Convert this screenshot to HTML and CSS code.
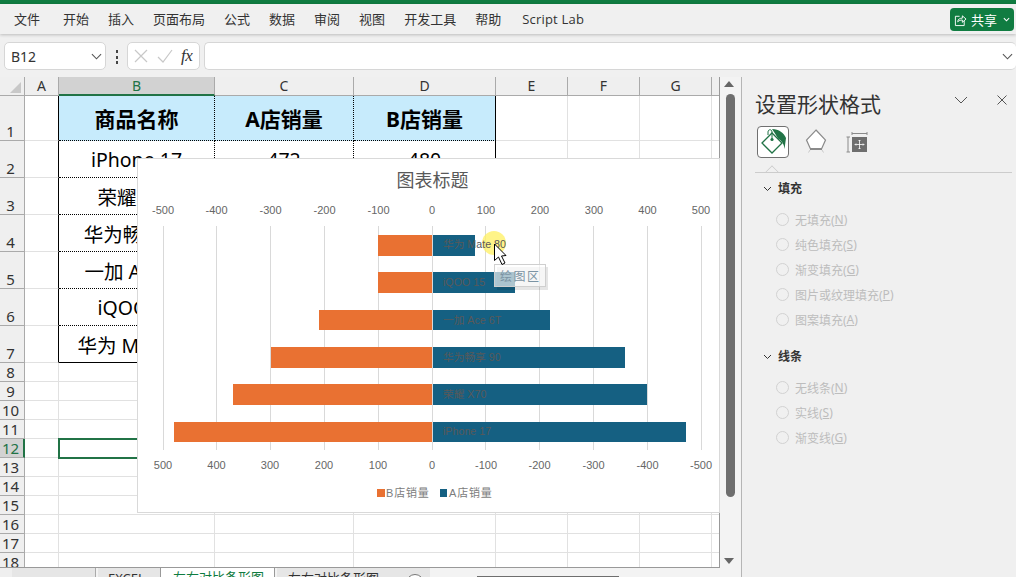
FILE: index.html
```html
<!DOCTYPE html>
<html lang="zh-CN">
<head>
<meta charset="utf-8">
<title>Excel</title>
<link rel="stylesheet" href="styles.css">
</head>
<body>
<div class="topbar"></div>
<header class="ribbon">
  <nav class="tabs">
    <span class="tab first">文件</span><span class="tab">开始</span><span class="tab">插入</span><span class="tab">页面布局</span><span class="tab">公式</span><span class="tab">数据</span><span class="tab">审阅</span><span class="tab">视图</span><span class="tab">开发工具</span><span class="tab">帮助</span><span class="tab script">Script Lab</span>
  </nav>
  <button class="share">
    <svg class="share-icon" viewBox="0 0 14 14"><path d="M6 3H1.500V13H11V8" fill="none" stroke="#fff"/><path d="M4 9C4 6 6.500 5 9 5V2.500L13 6L9 9.500V7C7 7 5.500 7.500 4 9Z" fill="none" stroke="#fff"/></svg>
    <span>共享</span>
    <svg class="share-chev" viewBox="0 0 8 5"><path d="M1 1L4 4L7 1" fill="none" stroke="#fff" stroke-width="1.200"/></svg>
  </button>
</header>
<section class="formula">
  <div class="namebox"><span>B12</span>
    <svg class="chev" viewBox="0 0 12 7"><path d="M1 1L6 6L11 1" fill="none" stroke="#555" stroke-width="1.200"/></svg>
  </div>
  <div class="dots"><i></i><i></i><i></i></div>
  <div class="fxbox">
    <svg class="fx-icon" viewBox="0 0 14 14"><path d="M1 1L13 13M13 1L1 13" stroke="#c8c8c8" fill="none" stroke-width="1.200"/></svg>
    <svg class="fx-icon" viewBox="0 0 16 14"><path d="M1 8L6 13L15 1" stroke="#c8c8c8" fill="none" stroke-width="1.200"/></svg>
    <span class="fx">fx</span>
  </div>
  <div class="input">
    <svg class="chev" viewBox="0 0 12 7"><path d="M1 1L6 6L11 1" fill="none" stroke="#555" stroke-width="1.200"/></svg>
  </div>
</section>
<main class="main">
  <section class="sheet">
    <div class="grid">
      <div class="ch corner"><span class="tri"></span></div><div class="ch">A</div><div class="ch on">B</div><div class="ch">C</div><div class="ch">D</div><div class="ch">E</div><div class="ch">F</div><div class="ch">G</div><div class="ch"></div>

      <div class="rh">1</div><div class="c la"></div><div class="c th">商品名称</div><div class="c th">A店销量</div><div class="c th ld">B店销量</div><div class="c"></div><div class="c"></div><div class="c"></div><div class="c"></div>
      <div class="rh">2</div><div class="c la"></div><div class="c td">iPhone 17</div><div class="c td">472</div><div class="c td ld">480</div><div class="c"></div><div class="c"></div><div class="c"></div><div class="c"></div>
      <div class="rh">3</div><div class="c la"></div><div class="c td">荣耀 X70</div><div class="c td">400</div><div class="c td ld">370</div><div class="c"></div><div class="c"></div><div class="c"></div><div class="c"></div>
      <div class="rh">4</div><div class="c la"></div><div class="c td">华为畅享 90</div><div class="c td">358</div><div class="c td ld">300</div><div class="c"></div><div class="c"></div><div class="c"></div><div class="c"></div>
      <div class="rh">5</div><div class="c la"></div><div class="c td">一加 Ace 6T</div><div class="c td">220</div><div class="c td ld">210</div><div class="c"></div><div class="c"></div><div class="c"></div><div class="c"></div>
      <div class="rh">6</div><div class="c la"></div><div class="c td">iQOO 15</div><div class="c td">155</div><div class="c td ld">100</div><div class="c"></div><div class="c"></div><div class="c"></div><div class="c"></div>
      <div class="rh">7</div><div class="c la"></div><div class="c td end">华为 Mate 80</div><div class="c td end">80</div><div class="c td ld end">100</div><div class="c"></div><div class="c"></div><div class="c"></div><div class="c"></div>
      <div class="rh">8</div><div class="c"></div><div class="c"></div><div class="c"></div><div class="c"></div><div class="c"></div><div class="c"></div><div class="c"></div><div class="c"></div>
      <div class="rh">9</div><div class="c"></div><div class="c"></div><div class="c"></div><div class="c"></div><div class="c"></div><div class="c"></div><div class="c"></div><div class="c"></div>
      <div class="rh">10</div><div class="c"></div><div class="c"></div><div class="c"></div><div class="c"></div><div class="c"></div><div class="c"></div><div class="c"></div><div class="c"></div>
      <div class="rh">11</div><div class="c"></div><div class="c"></div><div class="c"></div><div class="c"></div><div class="c"></div><div class="c"></div><div class="c"></div><div class="c"></div>
      <div class="rh on">12</div><div class="c"></div><div class="c sel"></div><div class="c"></div><div class="c"></div><div class="c"></div><div class="c"></div><div class="c"></div><div class="c"></div>
      <div class="rh">13</div><div class="c"></div><div class="c"></div><div class="c"></div><div class="c"></div><div class="c"></div><div class="c"></div><div class="c"></div><div class="c"></div>
      <div class="rh">14</div><div class="c"></div><div class="c"></div><div class="c"></div><div class="c"></div><div class="c"></div><div class="c"></div><div class="c"></div><div class="c"></div>
      <div class="rh">15</div><div class="c"></div><div class="c"></div><div class="c"></div><div class="c"></div><div class="c"></div><div class="c"></div><div class="c"></div><div class="c"></div>
      <div class="rh">16</div><div class="c"></div><div class="c"></div><div class="c"></div><div class="c"></div><div class="c"></div><div class="c"></div><div class="c"></div><div class="c"></div>
      <div class="rh">17</div><div class="c"></div><div class="c"></div><div class="c"></div><div class="c"></div><div class="c"></div><div class="c"></div><div class="c"></div><div class="c"></div>
      <div class="rh">18</div><div class="c"></div><div class="c"></div><div class="c"></div><div class="c"></div><div class="c"></div><div class="c"></div><div class="c"></div><div class="c"></div>
    </div>

    <svg class="chart" viewBox="137 158 583 356">
      <rect x="137.500" y="158.500" width="582" height="354" fill="#fff" stroke="#d9d9d9"/>
      <text class="title" x="432.500" y="187">图表标题</text>
      <g class="gridlines">
        <path d="M163.500 226V450M216.500 226V450M270.500 226V450M324.500 226V450M378.500 226V450M485.500 226V450M539.500 226V450M593.500 226V450M647.500 226V450M701.500 226V450"/>
      </g>
      <g class="orange">
        <rect x="378" y="235" width="54" height="21"/>
        <rect x="378" y="272" width="54" height="21"/>
        <rect x="319" y="310" width="113" height="20"/>
        <rect x="271" y="347" width="161" height="21"/>
        <rect x="233" y="384" width="199" height="21"/>
        <rect x="174" y="422" width="258" height="20"/>
      </g>
      <g class="blue">
        <rect x="433" y="235" width="42" height="21"/>
        <rect x="433" y="272" width="82" height="21"/>
        <rect x="433" y="310" width="117" height="20"/>
        <rect x="433" y="347" width="192" height="21"/>
        <rect x="433" y="384" width="214" height="21"/>
        <rect x="433" y="422" width="253" height="20"/>
      </g>
      <path class="axis" d="M432.500 226V450"/>
      <g class="ticks">
        <text x="163" y="214">-500</text><text x="216.500" y="214">-400</text><text x="270.500" y="214">-300</text><text x="324.500" y="214">-200</text><text x="378.500" y="214">-100</text><text x="432" y="214">0</text><text x="486" y="214">100</text><text x="540" y="214">200</text><text x="594" y="214">300</text><text x="647.500" y="214">400</text><text x="701" y="214">500</text>
        <text x="163" y="469">500</text><text x="216.500" y="469">400</text><text x="270" y="469">300</text><text x="324" y="469">200</text><text x="378" y="469">100</text><text x="432" y="469">0</text><text x="486" y="469">-100</text><text x="539.500" y="469">-200</text><text x="593.500" y="469">-300</text><text x="647.500" y="469">-400</text><text x="701" y="469">-500</text>
      </g>
      <circle class="halo" cx="494" cy="243" r="12"/>
      <g class="labels">
        <text x="443" y="248">华为 Mate 80</text>
        <text x="443" y="286">iQOO 15</text>
        <text x="443" y="324">一加 Ace 6T</text>
        <text x="443" y="361">华为畅享 90</text>
        <text x="443" y="398">荣耀 X70</text>
        <text x="443" y="435">iPhone 17</text>
      </g>
      <rect class="lg-b" x="377" y="489" width="8" height="8"/>
      <text class="legend" x="386" y="497">B店销量</text>
      <rect class="lg-a" x="440" y="489" width="7" height="8"/>
      <text class="legend" x="449" y="497">A店销量</text>

      <rect class="tip-shadow" x="497" y="267" width="51" height="23"/>
      <rect class="tip" x="494.500" y="264.500" width="51" height="22"/>
      <text class="tip-text" x="500" y="281">绘图区</text>
      <path class="cursor" d="M494.500 244V260.500L498.500 257L502 264.500L505 263L501.500 256L506 255.500Z"/>
    </svg>

    <aside class="vscroll">
      <span class="up"></span>
      <span class="thumb"></span>
      <span class="down"></span>
    </aside>

    <footer class="sheettabs">
      <div class="nav"></div>
      <div class="st">EXCEL</div>
      <div class="st active">左右对比条形图</div>
      <div class="st next">左右对比条形图</div>
      <div class="plus"></div>
      <div class="hscroll"><span></span></div>
    </footer>
  </section>

  <aside class="pane">
    <div class="pane-head">
      <h2>设置形状格式</h2>
      <svg class="pane-chev" viewBox="0 0 14 8"><path d="M1 1L7 7L13 1" fill="none" stroke="#555"/></svg>
      <svg class="pane-x" viewBox="0 0 10 10"><path d="M.5.5L9.500 9.500M9.500.5L.5 9.500" fill="none" stroke="#555"/></svg>
    </div>
    <div class="icons">
      <span class="icon-box">
        <svg viewBox="0 0 32 32" width="32" height="32"><path d="M5 17L15 7L25 17L15 27Z" fill="none" stroke="#217346" stroke-width="1.300"/><circle cx="15" cy="13.500" r="1.600" fill="#217346"/><path d="M15 13V6C15 3 11 3 11 6V9" fill="none" stroke="#217346"/><path d="M15 3C22 3 27 7 29 12L27.500 23C27 18 25 14.500 21 12.500C19 9 17 6 15 3Z" fill="#217346"/></svg>
      </span>
      <svg class="icon-p" viewBox="0 0 24 26" width="24" height="26"><path d="M12 3L21.500 13L17.500 22H6.500L2.500 13Z" fill="#fff" stroke="#8a8a8a" stroke-width="1.200"/><path d="M6 22H18" stroke="#8a8a8a" stroke-width="2"/><path d="M6 23L4.500 25.500M18 23L19.500 25.500" stroke="#c8c8c8"/></svg>
      <svg class="icon-s" viewBox="0 0 24 26" width="24" height="26"><path d="M2 6V21M.5 6H4M.5 21H4M6 2.500H21M6 1V4M21 1V4" stroke="#8a8a8a" fill="none"/><rect x="6" y="6" width="15" height="15" fill="#6e6e6e"/><path d="M13.500 9V18M9 13.500H18M12.500 10L13.500 9L14.500 10M12.500 17L13.500 18L14.500 17M10 12.500L9 13.500L10 14.500M17 12.500L18 13.500L17 14.500" stroke="#fff" fill="none" stroke-width=".8"/></svg>
    </div>
    <div class="divider"><span class="notch"></span></div>
    <section class="group">
      <h3><svg viewBox="0 0 9 6" class="gchev"><path d="M1 1L4.500 4.500L8 1" fill="none" stroke="#333"/></svg>填充</h3>
      <label class="opt"><i></i>无填充(<u>N</u>)</label>
      <label class="opt"><i></i>纯色填充(<u>S</u>)</label>
      <label class="opt"><i></i>渐变填充(<u>G</u>)</label>
      <label class="opt"><i></i>图片或纹理填充(<u>P</u>)</label>
      <label class="opt"><i></i>图案填充(<u>A</u>)</label>
    </section>
    <section class="group second">
      <h3><svg viewBox="0 0 9 6" class="gchev"><path d="M1 1L4.500 4.500L8 1" fill="none" stroke="#333"/></svg>线条</h3>
      <label class="opt"><i></i>无线条(<u>N</u>)</label>
      <label class="opt"><i></i>实线(<u>S</u>)</label>
      <label class="opt"><i></i>渐变线(<u>G</u>)</label>
    </section>
  </aside>
</main>
</body>
</html>
```
FILE: styles.css
```css
* { box-sizing: border-box; }
html, body { margin: 0; height: 100%; overflow: hidden; }
body {
  width: 1016px;
  height: 577px;
  display: flex;
  flex-direction: column;
  background: #f0f0f0;
  color: #222;
  font-family: "Noto Sans", "Noto Sans CJK SC", sans-serif;
}

.topbar { height: 4px; flex: none; background: #107c41; }

.ribbon {
  height: 30px;
  flex: none;
  display: flex;
  align-items: center;
  justify-content: space-between;
  padding: 0 2px 0 0;
  box-shadow: 0 1px 3px rgba(0, 0, 0, .22);
  position: relative;
}
.tabs { display: flex; padding-left: 14px; gap: 19px; font-size: 13px; color: #333; }
.tab { line-height: 20px; white-space: nowrap; }
.tab.first { margin-right: 4px; }
.tab.script { margin-left: 2px; font-family: "Open Sans", "Noto Sans", sans-serif; letter-spacing: .2px; }

.share {
  width: 64px;
  height: 23px;
  border: 0;
  border-radius: 4px;
  background: #107c41;
  color: #fff;
  font: 13px "Noto Sans CJK SC", sans-serif;
  display: flex;
  align-items: center;
  padding: 0 0 0 4px;
}
.share-icon { width: 13px; height: 14px; margin-right: 4px; margin-top: 2px; }
.share-chev { width: 7px; height: 5px; margin-left: 6px; }

.formula {
  height: 43px;
  flex: none;
  display: flex;
  align-items: flex-start;
  padding: 8px 0 0 4px;
}
.namebox, .fxbox, .input {
  height: 28px;
  background: #fff;
  border: 1px solid #d6d6d6;
  border-radius: 5px;
  display: flex;
  align-items: center;
}
.namebox {
  width: 102px;
  padding: 0 3px 0 6px;
  justify-content: space-between;
  font-size: 14px;
  color: #333;
}
.chev { width: 11px; height: 7px; }
.dots { width: 21px; display: flex; flex-direction: column; align-items: center; gap: 2.500px; padding-top: 8px; }
.dots i { width: 2px; height: 3px; background: #444; }
.fxbox { width: 73px; padding-left: 6px; gap: 9px; }
.fx-icon { width: 14px; height: 14px; }
.fxbox .fx-icon + .fx-icon { width: 16px; }
.fx { font: italic 17px "Liberation Serif", serif; color: #333; margin-left: -1px; letter-spacing: -.5px; }
.input {
  flex: 1;
  margin-left: 4px;
  justify-content: flex-end;
  padding-right: 3px;
  border-right: 0;
  margin-right: 0;
}

.main { flex: 1; min-height: 0; display: flex; }

.sheet { width: 741px; flex: none; position: relative; overflow: hidden; background: #f3f3f3; }

.grid {
  width: 720px;
  height: 491px;
  display: grid;
  grid-template-columns: 25px 34px 156px 139px 142px 72px 72px 72px 8px;
  grid-template-rows: 19px 45px repeat(6, 37px) repeat(4, 19px) 19px repeat(5, 19px) 19px;
  background: #fff;
  overflow: hidden;
  border-right: 1px solid #999;
}
.ch {
  background: #efefef;
  border-right: 1px solid #aaa;
  border-bottom: 1px solid #aaa;
  font-size: 14px;
  line-height: 18px;
  text-align: center;
  color: #333;
}
.ch.corner { position: relative; }
.tri {
  position: absolute;
  right: 3px;
  bottom: 2px;
  width: 0;
  height: 0;
  border-left: 11px solid transparent;
  border-bottom: 11px solid #c8c8c8;
}
.ch.on {
  background: #d2d2d2;
  color: #217346;
  border-bottom: 2px solid #217346;
  border-right-color: #aaa;
}
.rh {
  background: #efefef;
  border-right: 1px solid #aaa;
  border-bottom: 1px solid #aaa;
  font-size: 15px;
  line-height: 18px;
  text-align: center;
  padding-right: 3px;
  color: #333;
  display: flex;
  align-items: flex-end;
  justify-content: center;
}
.rh.on { background: #d2d2d2; color: #217346; border-right: 2px solid #217346; padding-right: 2px; }
.c {
  background: #fff;
  border-right: 1px solid #e1e1e1;
  border-bottom: 1px solid #e1e1e1;
  display: flex;
  align-items: center;
  justify-content: center;
  white-space: nowrap;
  color: #000;
}
.c.la { border-right: 1px solid #000; }
.c.th, .c.td { border-right: 1px dotted #000; border-bottom: 1px dotted #000; }
.c.th { background: #c7ebfc; font-size: 21px; font-weight: 700; font-family: "Noto Sans", "Noto Sans CJK SC", sans-serif; }
.c.td { font-size: 19.500px; }
.c.ld { border-right: 1px solid #000; }
.c.end { border-bottom: 1px solid #000; }
.c.sel { outline: 2px solid #217346; outline-offset: -1px; position: relative; z-index: 1; }

.chart {
  position: absolute;
  left: 137px;
  top: 81px;
  width: 583px;
  height: 356px;
  z-index: 2;
  font-family: "Liberation Sans", "Noto Sans CJK SC", sans-serif;
}
.title { font-size: 18px; fill: #595959; text-anchor: middle; }
.gridlines path, .axis { stroke: #d9d9d9; stroke-width: 1; fill: none; }
.orange rect { fill: #e97132; }
.blue rect { fill: #156082; }
.ticks text { font-size: 11px; fill: #666; text-anchor: middle; }
.labels text { font-size: 10.700px; fill: #595959; }
.legend { font-size: 11px; fill: #7c7c7c; letter-spacing: .8px; }
.lg-b { fill: #e97132; }
.lg-a { fill: #156082; }
.halo { fill: #fff060; opacity: .75; }
.tip-shadow { fill: #000; opacity: .1; }
.tip { fill: #fff; fill-opacity: .65; stroke: #cfcfcf; }
.tip-text { font-size: 12px; fill: #7b93a3; letter-spacing: 1.500px; }
.cursor { fill: #fff; stroke: #000; stroke-width: 1; }

.vscroll { position: absolute; left: 720px; top: 0; width: 21px; height: 491px; }
.up, .down {
  position: absolute;
  left: 4px;
  width: 0;
  height: 0;
  border-left: 5px solid transparent;
  border-right: 5px solid transparent;
}
.up { top: 4px; border-bottom: 6px solid #666; }
.down { top: 481px; border-top: 6px solid #666; }
.thumb { position: absolute; left: 6px; top: 17px; width: 9px; height: 403px; border-radius: 5px; background: #6e6e6e; }

.sheettabs {
  position: absolute;
  left: 0;
  top: 490px;
  width: 720px;
  height: 10px;
  border-top: 1px solid #999;
  display: flex;
  overflow: hidden;
  font-size: 13px;
  line-height: 20px;
  background: #f3f3f3;
}
.nav { width: 96px; background: linear-gradient(90deg, #efefef 12px, #e6e6e6 12px); border-right: 1px solid #aaa; }
.st { padding: 0 11px; height: 20px; white-space: nowrap; color: #333; background: #e6e6e6; }
.st:nth-child(2) { width: 62px; margin-left: 2px; padding: 0 10px; }
.st.active { width: 115px; margin-top: -1px; background: #fff; color: #107c41; border-left: 1px solid #999; border-right: 1px solid #999; padding-left: 12px; margin-left: 0; }
.st.next { width: 153px; margin-left: 2px; padding-left: 11px; }
.plus { position: absolute; left: 406px; top: 6px; width: 18px; height: 18px; border: 1px solid #777; border-radius: 50%; background: #fff; }
.hscroll { flex: 1; position: relative; }
.hscroll span { position: absolute; left: 47px; top: 8px; width: 142px; height: 1px; background: #6e6e6e; }

.pane {
  flex: 1;
  border-left: 1px solid #b5b5b5;
  padding: 11px 4px 0 13px;
  background: #f0f0f0;
}
.pane-head { display: flex; align-items: center; height: 32px; }
.pane-head h2 { margin: 0; font-size: 21px; font-weight: 400; color: #333; line-height: 32px; flex: 1; white-space: nowrap; }
.pane-chev { width: 14px; height: 8px; margin-right: 29px; margin-top: -8px; }
.pane-x { width: 10px; height: 10px; margin-right: 5px; margin-top: -8px; }
.icons { display: flex; align-items: center; margin: 6px 0 0 2px; height: 32px; }
.icon-box { width: 32px; height: 32px; border: 1px solid #707070; border-radius: 4px; background: #fff; display: block; overflow: hidden; }
.icon-box svg { display: block; margin: -1px; }
.icon-p { margin-left: 15px; margin-top: -4px; }
.icon-s { margin-left: 18px; margin-top: 4px; }
.divider { position: relative; margin: 14px 0 0 0; height: 1px; background: #ccc; }
.notch {
  position: absolute;
  left: 12px;
  top: -5px;
  width: 10px;
  height: 10px;
  transform: rotate(45deg);
  border-left: 1px solid #ccc;
  border-top: 1px solid #ccc;
  background: #f0f0f0;
  clip-path: polygon(0 0, 100% 0, 0 100%);
}
.group h3 {
  margin: 7px 0 9px;
  height: 18px;
  display: flex;
  align-items: center;
  font-size: 12px;
  font-weight: 700;
  color: #333;
  line-height: 18px;
  padding-left: 8px;
}
.gchev { width: 9px; height: 6px; margin-right: 6px; }
.opt {
  display: flex;
  align-items: center;
  height: 25px;
  padding-left: 21px;
  font-size: 12px;
  color: #bdbdbd;
  white-space: nowrap;
}
.opt i { width: 13px; height: 13px; border: 1px solid #d2d2d2; border-radius: 50%; margin-right: 6px; }
.opt u { text-decoration: underline; }
.group.second { margin-top: 16px; }
```
